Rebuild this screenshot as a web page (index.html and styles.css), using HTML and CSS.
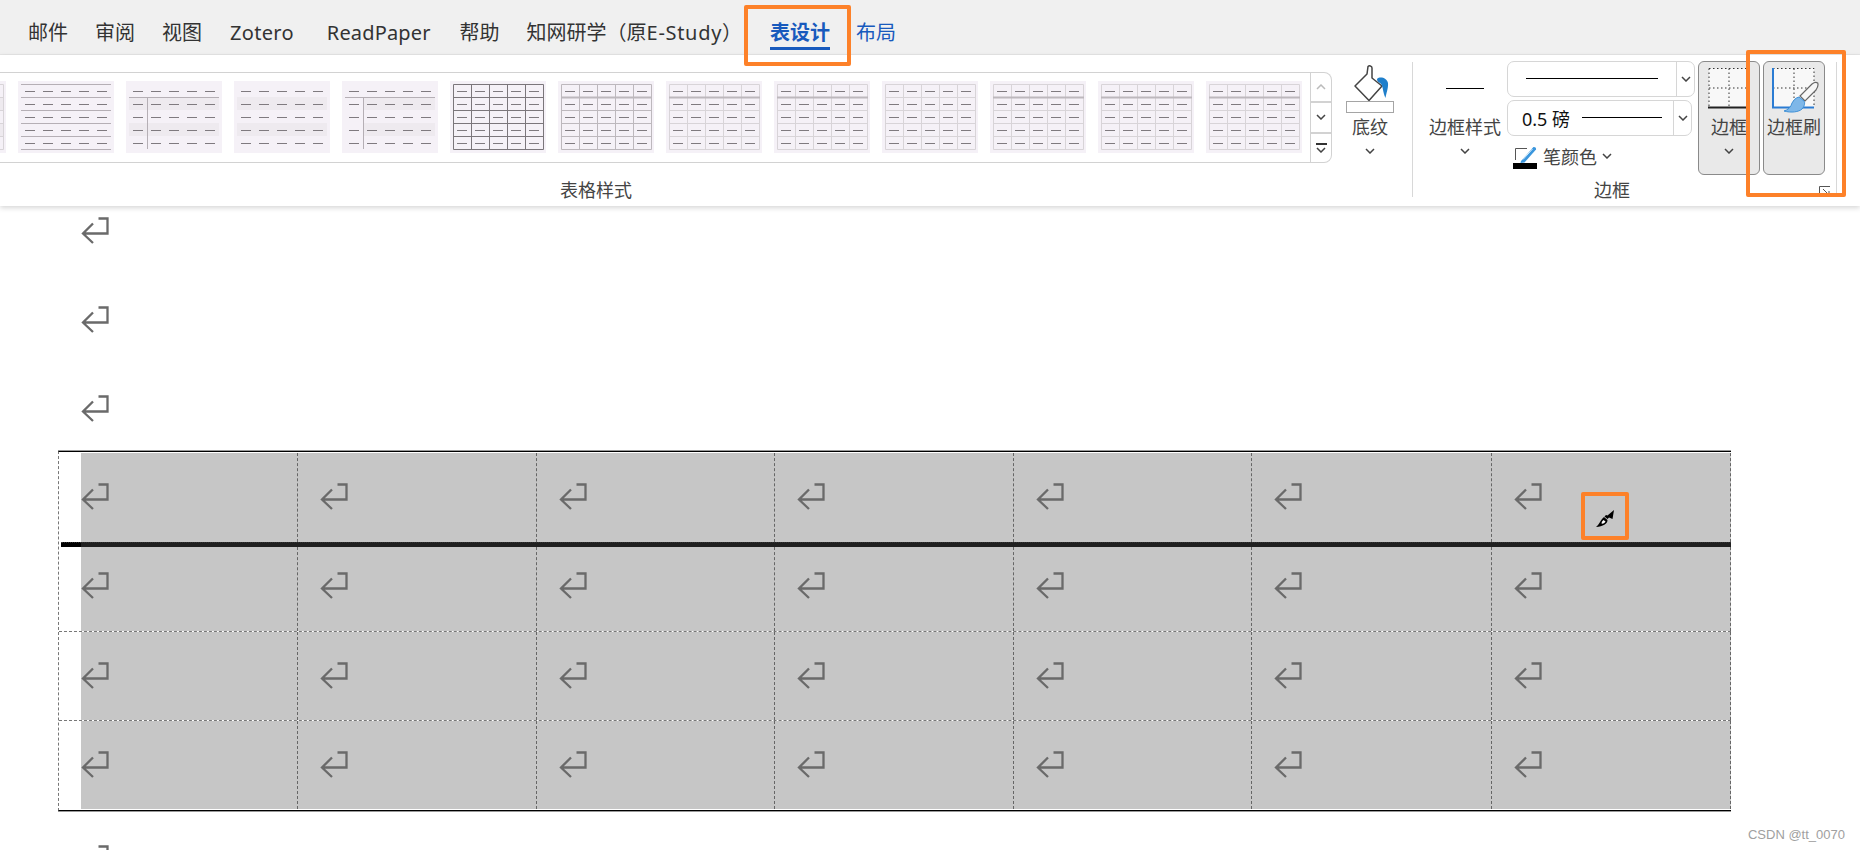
FILE: index.html
```html
<!DOCTYPE html>
<html lang="zh-CN">
<head>
  <meta charset="UTF-8">
  <title>表设计</title>
  <link rel="stylesheet" href="styles.css">
</head>
<body>
  <!-- shared drawings -->
  <svg class="defs" width="0" height="0">
    <symbol id="dashes" viewBox="0 0 96 72"><path d="M7 10.5H89M7 23.5H89M7 36.5H89M7 49.5H89M7 62.5H89" stroke="#7f7a7f" stroke-dasharray="10 8" fill="none"/></symbol>
    <symbol id="grid" viewBox="0 0 96 72"><path d="M3.5 3.5H93.5V68.5H3.5ZM3.5 16.5H93.5M3.5 29.5H93.5M3.5 42.5H93.5M3.5 55.5H93.5M21.5 3.5V68.5M39.5 3.5V68.5M57.5 3.5V68.5M75.5 3.5V68.5" stroke="currentColor" fill="none"/></symbol>
    <symbol id="head" viewBox="0 0 96 72"><path d="M3 16.5H94" stroke="#bdb8bd" stroke-width="2" fill="none"/></symbol>
    <symbol id="ret" viewBox="0 0 28 27"><path d="M17.500 1.500H26.500V16.500H2M12 6.500L2 16.500L12 26" stroke="#6a6a6a" stroke-width="2.300" fill="none"/></symbol>
    <symbol id="chev" viewBox="0 0 10 6"><path d="M1 1L5 5L9 1" stroke="currentColor" stroke-width="1.5" fill="none"/></symbol>
  </svg>

  <div class="tabs">
    <span class="tab">邮件</span>
    <span class="tab">审阅</span>
    <span class="tab">视图</span>
    <span class="tab tab-zotero">Zotero</span>
    <span class="tab tab-paper">ReadPaper</span>
    <span class="tab tab-help">帮助</span>
    <span class="tab">知网研学（原<span class="latin">E-Study</span>）</span>
    <span class="tab tab-active">表设计</span>
    <span class="tab tab-blue">布局</span>
  </div>

  <div class="ribbon">
    <div class="group group-styles">
      <div class="group-top">
        <div class="gallery">
          <div class="thumbs">
            <svg class="thumb thumb-light" viewBox="0 0 96 72"><path d="M3 16H93V29H3ZM3 42H93V55H3Z" fill="#eeeaef"/><use href="#grid"/><use href="#dashes"/></svg>
            <svg class="thumb" viewBox="0 0 96 72"><path d="M3 3.5H93M3 16.5H93M3 29.5H93M3 42.5H93M3 55.5H93M3 68.5H93" stroke="#b5afb5" fill="none"/><use href="#dashes"/></svg>
            <svg class="thumb" viewBox="0 0 96 72"><path d="M3 16H93V29H3ZM3 42H93V55H3Z" fill="#eeeaef"/><path d="M3 16.5H93M21.5 16.5V68" stroke="#b5afb5" fill="none"/><use href="#dashes"/></svg>
            <svg class="thumb" viewBox="0 0 96 72"><path d="M3 16H93V29H3ZM3 42H93V55H3Z" fill="#eeeaef"/><use href="#dashes"/></svg>
            <svg class="thumb" viewBox="0 0 96 72"><path d="M21 16H93V29H21ZM21 42H93V55H21Z" fill="#eeeaef"/><path d="M3 16.5H93M21.5 16.5V68" stroke="#b5afb5" fill="none"/><use href="#dashes"/></svg>
            <svg class="thumb thumb-dark" viewBox="0 0 96 72"><use href="#grid"/><use href="#dashes"/></svg>
            <svg class="thumb thumb-mid" viewBox="0 0 96 72"><use href="#grid"/><use href="#head"/><use href="#dashes"/></svg>
            <svg class="thumb thumb-light" viewBox="0 0 96 72"><use href="#grid"/><use href="#head"/><use href="#dashes"/></svg>
            <svg class="thumb thumb-light" viewBox="0 0 96 72"><use href="#grid"/><use href="#head"/><use href="#dashes"/></svg>
            <svg class="thumb thumb-light" viewBox="0 0 96 72"><use href="#grid"/><use href="#dashes"/></svg>
            <svg class="thumb thumb-light" viewBox="0 0 96 72"><use href="#grid"/><use href="#head"/><use href="#dashes"/></svg>
            <svg class="thumb thumb-light" viewBox="0 0 96 72"><use href="#grid"/><use href="#head"/><use href="#dashes"/></svg>
            <svg class="thumb thumb-light" viewBox="0 0 96 72"><use href="#grid"/><use href="#head"/><use href="#dashes"/></svg>
          </div>
          <div class="scroller">
            <div class="scroll-btn scroll-off"><svg class="chev chev-up"><use href="#chev"/></svg></div>
            <div class="scroll-btn"><svg class="chev"><use href="#chev"/></svg></div>
            <div class="scroll-btn scroll-more"><i></i><svg class="chev"><use href="#chev"/></svg></div>
          </div>
        </div>
        <div class="big-btn btn-shade">
          <div class="big-icon">
            <svg class="bucket" width="48" height="48" viewBox="0 0 48 48">
              <path d="M22 1.5C23 0.5 26 0.5 26 3V13L36 21L23 35.5L9 21L21 9Z" fill="#fff" stroke="#444" stroke-width="1.5" stroke-linejoin="round"/>
              <path d="M31 14C34 11 41 13 42 18C42.500 23 40 29 39.500 33C37 28 37 21 35 19C33 17 31 17 31 14Z" fill="#1f7fcb"/>
              <rect x="0.5" y="36.500" width="47" height="11" fill="#fff" stroke="#a5a5a5"/>
            </svg>
          </div>
          <span class="big-label">底纹</span>
          <svg class="chev"><use href="#chev"/></svg>
        </div>
      </div>
      <div class="group-label">表格样式</div>
    </div>

    <div class="sep"></div>

    <div class="group group-borders">
      <div class="group-top">
        <div class="big-btn btn-style">
          <div class="big-icon"><i class="style-line"></i></div>
          <span class="big-label">边框样式</span>
          <svg class="chev"><use href="#chev"/></svg>
        </div>
        <div class="combos">
          <div class="combo combo-line">
            <div class="combo-main"><i class="combo-rule"></i></div>
            <div class="combo-drop"><svg class="chev"><use href="#chev"/></svg></div>
          </div>
          <div class="combo combo-weight">
            <div class="combo-main"><span class="weight">0.5 磅</span><i class="combo-rule"></i></div>
            <div class="combo-drop"><svg class="chev"><use href="#chev"/></svg></div>
          </div>
          <div class="pen-row">
            <svg width="24" height="24" viewBox="0 0 24 24">
              <path d="M2.500 15V3.500H14" stroke="#555" fill="none"/>
              <path d="M8 16L20 2.500C21 1.500 23.500 2.500 23 4.500L11.500 17.500L7.500 18Z" fill="#3a96dd"/>
              <path d="M10 14.500L19.500 4" stroke="#d5ebfa" fill="none"/>
              <rect x="0" y="18" width="24" height="6" fill="#000"/>
            </svg>
            <span class="pen-label">笔颜色</span>
            <svg class="chev"><use href="#chev"/></svg>
          </div>
        </div>
        <div class="big-btn tool-btn">
          <div class="big-icon">
            <svg class="tool-icon" width="42" height="42" viewBox="0 0 42 42">
              <rect x="1" y="1.500" width="40" height="39" fill="#f8f8f8"/>
              <path d="M1 1.500H41V40M1 1.500V40M21 1.500V40M1 21H41" stroke="#333" stroke-dasharray="1.500 2.500" fill="none"/>
              <path d="M0 40.500H42" stroke="#222" stroke-width="2"/>
            </svg>
          </div>
          <span class="big-label">边框</span>
          <svg class="chev"><use href="#chev"/></svg>
        </div>
        <div class="big-btn tool-btn">
          <div class="big-icon">
            <svg class="tool-icon" width="50" height="46" viewBox="0 0 50 46">
              <rect x="4" y="1.500" width="41" height="39" fill="#f8f8f8"/>
              <path d="M4 1.500H45V40M25 1.500V40M4 21H45" stroke="#333" stroke-dasharray="1.500 2.500" fill="none"/>
              <path d="M4 1V40.500H45" stroke="#2b7cd3" stroke-width="2" fill="none"/>
              <path d="M48.700 16C47 15 45 15.500 43 17L31 29L36 34L47 23C49 20 49.500 18 48.700 16Z" fill="#f6f6f6" stroke="#666" stroke-width="1.200"/>
              <path d="M30 30C26 31 25 33 23 36C22 40 19 43 15 44C22 46 30 45 33 42C36 39 36 35 35 34Z" fill="#7eb7e8" stroke="#3d8fd6"/>
            </svg>
          </div>
          <span class="big-label">边框刷</span>
        </div>
      </div>
      <div class="group-label">边框</div>
      <svg class="launcher" width="12" height="11" viewBox="0 0 12 11">
        <path d="M0.500 10V0.500H11" stroke="#555" fill="none"/>
        <path d="M4 3L10 9M10 5V9.500H5.500" stroke="#555" fill="none"/>
      </svg>
    </div>

    <div class="sep"></div>
  </div>

  <div class="doc">
    <div class="paras">
      <svg class="ret"><use href="#ret"/></svg>
      <svg class="ret"><use href="#ret"/></svg>
      <svg class="ret"><use href="#ret"/></svg>
    </div>

    <div class="table">
      <div class="row row-first">
        <div class="cell"><svg class="ret"><use href="#ret"/></svg></div>
        <div class="cell"><svg class="ret"><use href="#ret"/></svg></div>
        <div class="cell"><svg class="ret"><use href="#ret"/></svg></div>
        <div class="cell"><svg class="ret"><use href="#ret"/></svg></div>
        <div class="cell"><svg class="ret"><use href="#ret"/></svg></div>
        <div class="cell"><svg class="ret"><use href="#ret"/></svg></div>
        <div class="cell"><svg class="ret"><use href="#ret"/></svg></div>
      </div>
      <div class="thick"></div>
      <div class="row row-second">
        <div class="cell"><svg class="ret"><use href="#ret"/></svg></div>
        <div class="cell"><svg class="ret"><use href="#ret"/></svg></div>
        <div class="cell"><svg class="ret"><use href="#ret"/></svg></div>
        <div class="cell"><svg class="ret"><use href="#ret"/></svg></div>
        <div class="cell"><svg class="ret"><use href="#ret"/></svg></div>
        <div class="cell"><svg class="ret"><use href="#ret"/></svg></div>
        <div class="cell"><svg class="ret"><use href="#ret"/></svg></div>
      </div>
      <div class="row">
        <div class="cell"><svg class="ret"><use href="#ret"/></svg></div>
        <div class="cell"><svg class="ret"><use href="#ret"/></svg></div>
        <div class="cell"><svg class="ret"><use href="#ret"/></svg></div>
        <div class="cell"><svg class="ret"><use href="#ret"/></svg></div>
        <div class="cell"><svg class="ret"><use href="#ret"/></svg></div>
        <div class="cell"><svg class="ret"><use href="#ret"/></svg></div>
        <div class="cell"><svg class="ret"><use href="#ret"/></svg></div>
      </div>
      <div class="row row-last">
        <div class="cell"><svg class="ret"><use href="#ret"/></svg></div>
        <div class="cell"><svg class="ret"><use href="#ret"/></svg></div>
        <div class="cell"><svg class="ret"><use href="#ret"/></svg></div>
        <div class="cell"><svg class="ret"><use href="#ret"/></svg></div>
        <div class="cell"><svg class="ret"><use href="#ret"/></svg></div>
        <div class="cell"><svg class="ret"><use href="#ret"/></svg></div>
        <div class="cell"><svg class="ret"><use href="#ret"/></svg></div>
      </div>
    </div>

    <svg class="ret ret-after"><use href="#ret"/></svg>
  </div>

  <!-- annotations on top of the screenshot -->
  <div class="mark mark-tab"></div>
  <div class="mark mark-brush"></div>
  <div class="mark mark-cursor">
    <svg class="cursor-brush" width="18" height="17" viewBox="0 0 18 17">
      <path d="M18 0L16.500 9L13 7.500L11.500 9L8.500 6.500L10 5L11.500 5.500Z" fill="#000"/>
      <path d="M8 7L11.500 10C11.500 14 7 16.500 0 17C4 14 4 10 8 7Z" fill="#000"/>
      <path d="M7.500 10L9.500 11.500C9 13 7 14 5.500 13.500C5.500 12 6.500 11 7.500 10Z" fill="#fff"/>
    </svg>
  </div>
  <div class="watermark">CSDN @tt_0070</div>
</body>
</html>
```
FILE: styles.css
```css
* {
  box-sizing: border-box;
}

html,
body {
  height: 100%;
}

body {
  margin: 0;
  overflow: hidden;
  position: relative;
  background: #fff;
  color: #333;
  font-family: "Noto Sans", "Noto Sans CJK SC", sans-serif;
}

.defs {
  position: absolute;
}

/* tab strip */
.tabs {
  display: flex;
  align-items: flex-start;
  height: 55px;
  padding: 19px 0 0 28px;
  background: #f0f0f0;
  border-bottom: 1px solid #e6e6e6;
  font-size: 20px;
  line-height: 28px;
  white-space: nowrap;
}

.tab {
  margin-right: 27px;
}

.tab-zotero {
  margin-left: 1px;
  letter-spacing: 0.3px;
}

.tab-paper {
  margin-left: 6px;
  letter-spacing: 0.15px;
}

.tab-help {
  margin-left: 2px;
}

.latin {
  letter-spacing: 0.7px;
}

.tab-active {
  margin-left: 1px;
  margin-right: 26px;
  color: #185abd;
  font-weight: 700;
  border-bottom: 3px solid #185abd;
}

.tab-blue {
  color: #185abd;
}

/* ribbon */
.ribbon {
  position: relative;
  display: flex;
  height: 151px;
  background: #fff;
  box-shadow: 0 2px 5px rgba(0, 0, 0, 0.16);
  font-size: 18px;
  color: #444;
}

.group {
  display: flex;
  flex-direction: column;
  flex: none;
  padding: 6px 0 4px;
}

.group-styles {
  width: 1632px;
  margin-left: -220px;
}

.group-borders {
  position: relative;
  width: 423px;
}

.group-top {
  display: flex;
  align-items: flex-start;
}

.group-label {
  margin-top: auto;
  line-height: 24px;
  text-align: center;
}

.group-borders .group-label {
  padding-right: 25px;
}

.launcher {
  position: absolute;
  right: 5px;
  bottom: 9px;
}

.sep {
  flex: none;
  width: 1px;
  margin: 7px 0 9px;
  background: #d8d8d8;
}

/* style gallery */
.gallery {
  display: flex;
  flex: none;
  width: 1434px;
  height: 91px;
  margin: 11px 0 0 118px;
  border: 1px solid #d2d2d2;
  border-left: 0;
  border-radius: 0 8px 8px 0;
}

.thumbs {
  display: flex;
  gap: 12px;
  padding: 8px 8px 0 12px;
}

.thumb {
  flex: none;
  width: 96px;
  height: 72px;
  background: #f5f1f7;
}

.thumb-dark {
  color: #7b767b;
}

.thumb-mid {
  color: #bdb8bd;
}

.thumb-light {
  color: #d8d4d8;
}

.scroller {
  display: flex;
  flex-direction: column;
  flex: 1;
  border-left: 1px solid #d2d2d2;
}

.scroll-btn {
  display: flex;
  flex-direction: column;
  align-items: center;
  justify-content: center;
  flex: 1;
  border-bottom: 2px solid #d2d2d2;
}

.scroll-btn:last-child {
  border-bottom: 0;
}

.scroll-off {
  color: #bbb;
}

.scroll-more i {
  width: 11px;
  height: 2px;
  margin-bottom: 2px;
  background: #333;
}

.chev {
  display: block;
  flex: none;
  width: 10px;
  height: 6px;
  color: #444;
}

.scroll-off .chev {
  color: #bbb;
}

.chev-up {
  transform: rotate(180deg);
}

/* big buttons */
.big-btn {
  display: flex;
  flex-direction: column;
  align-items: center;
  flex: none;
}

.big-icon {
  display: flex;
  justify-content: center;
  width: 100%;
  height: 54px;
}

.big-label {
  line-height: 24px;
  white-space: nowrap;
}

.big-btn .chev {
  margin-top: 9px;
}

.btn-shade {
  width: 76px;
}

.bucket {
  margin-top: 4px;
}

.btn-style {
  width: 94px;
  padding-left: 10px;
}

.style-line {
  width: 38px;
  height: 1px;
  margin-top: 27px;
  background: #000;
}

/* width and weight boxes */
.combos {
  display: flex;
  flex-direction: column;
  width: 188px;
}

.combo {
  display: flex;
  height: 36px;
  border: 1px solid #d6d6d6;
  border-radius: 7px;
  margin-bottom: 3px;
}

.combo-weight {
  width: 185px;
}

.combo-main {
  display: flex;
  align-items: center;
  flex: 1;
  padding-left: 18px;
}

.combo-rule {
  display: block;
  height: 1px;
  background: #000;
}

.combo-line .combo-rule {
  width: 132px;
  margin-top: -1px;
}

.combo-weight .combo-main {
  padding-left: 14px;
}

.combo-weight .combo-rule {
  width: 80px;
  margin: -2px 0 0 12px;
}

.weight {
  color: #111;
  white-space: nowrap;
}

.combo-drop {
  display: flex;
  align-items: center;
  justify-content: center;
  width: 18px;
  border-left: 1px solid #d6d6d6;
}

.pen-row {
  display: flex;
  align-items: center;
  margin: 6px 0 0 6px;
}

.pen-label {
  margin: 0 5px 0 6px;
  line-height: 24px;
}

.pen-row .chev {
  margin-top: -2px;
}

/* border buttons */
.tool-btn {
  width: 62px;
  height: 114px;
  margin-left: 3px;
  padding-top: 6px;
  background: #e9e9e9;
  border: 1px solid #8a8a8a;
  border-radius: 6px;
}

.tool-btn .big-icon {
  height: 47px;
}

.tool-icon {
  flex: none;
  margin-top: -1px;
}

/* document */
.doc {
  padding: 11px 0 0 58px;
}

.ret {
  display: block;
  flex: none;
  width: 28px;
  height: 27px;
}

.paras {
  display: flex;
  flex-direction: column;
  gap: 62px;
  margin-left: 23px;
}

.table {
  width: 1673px;
  margin-top: 29px;
  border-top: 1px solid #000;
  border-bottom: 1px solid #000;
  border-left: 1px dashed #777;
  box-shadow: 0 -1px 0 #999, 0 1px 0 #999;
}

.row {
  display: grid;
  grid-template-columns: 239px 239px 238px 239px 238px 240px 239px;
  height: 89px;
  border-bottom: 1px dashed #777;
}

.row-first {
  height: 90px;
  padding-top: 1px;
  border-bottom: 0;
}

.row-second {
  height: 85px;
}

.row-last {
  padding-bottom: 1px;
  border-bottom: 0;
}

.cell {
  padding: 30px 0 0 22px;
  background: #c6c6c6;
  border-right: 1px dashed #666;
}

.cell:first-child {
  margin-left: 22px;
  padding-left: 0;
}

.row-second .cell {
  padding-top: 25px;
}

.thick {
  height: 5px;
  margin-left: 2px;
  background: linear-gradient(to right, #000 20px, #1f1f1f 20px);
  border-top: 1px dotted #333;
}

.ret-after {
  margin: 34px 0 0 23px;
}

/* orange annotations */
.mark {
  position: absolute;
  border: 4px solid #fd8129;
  border-radius: 2px;
}

.mark-tab {
  left: 744px;
  top: 5px;
  width: 107px;
  height: 61px;
}

.mark-brush {
  left: 1746px;
  top: 50px;
  width: 100px;
  height: 147px;
}

.mark-cursor {
  display: flex;
  align-items: center;
  justify-content: center;
  left: 1581px;
  top: 492px;
  width: 48px;
  height: 48px;
}

.cursor-brush {
  margin-top: 4px;
}

.watermark {
  position: absolute;
  right: 15px;
  bottom: 6px;
  color: #a0a0a0;
  font: 13px/18px "Liberation Sans", sans-serif;
}
```
